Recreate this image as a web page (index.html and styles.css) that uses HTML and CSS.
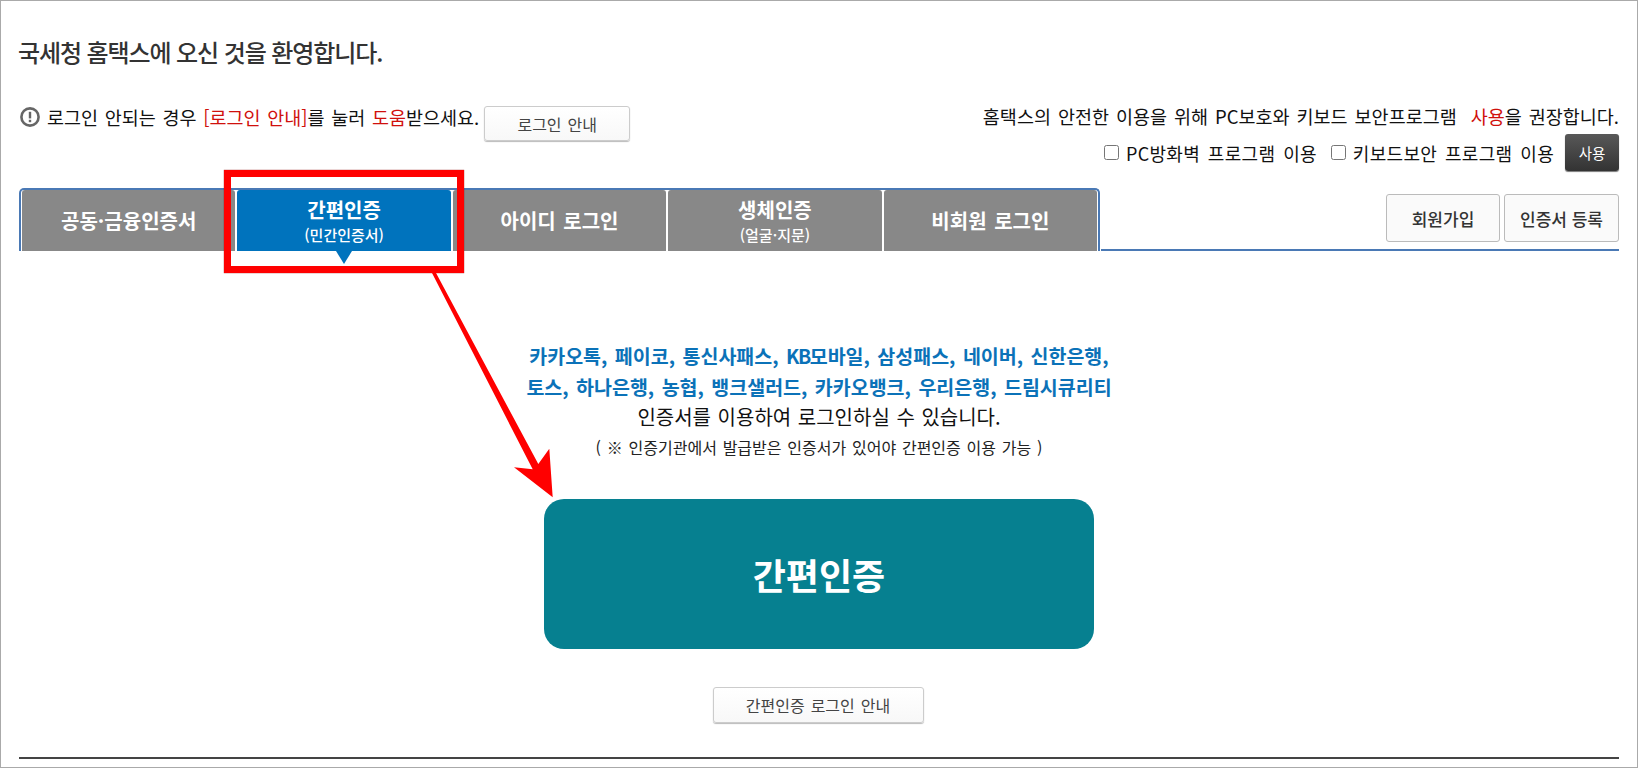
FILE: index.html
```html
<!DOCTYPE html>
<html lang="ko">

<head>
    <meta charset="UTF-8">
    <meta name="viewport" content="width=device-width, initial-scale=1.0">
    <title>국세청 홈택스 로그인</title>
    <link rel="stylesheet" href="styles.css">
</head>

<body>

    <div class="frame">
        <h1 class="page-title">국세청 홈택스에 오신 것을 환영합니다.</h1>

        <!-- Notice row -->
        <div class="notice-row">
            <div class="notice-left">
                <svg class="alert-icon" width="20" height="20" viewBox="0 0 20 20">
                    <circle cx="10" cy="10" r="8.6" fill="none" stroke="#666" stroke-width="2.6"></circle>
                    <rect x="8.8" y="4.8" width="2.4" height="6.6" fill="#666"></rect>
                    <rect x="8.8" y="12.8" width="2.4" height="2.4" fill="#666"></rect>
                </svg>
                <span class="notice-text">로그인 안되는 경우 <em>[로그인 안내]</em>를 눌러 <em>도움</em>받으세요.</span>
                <button class="btn-plain btn-guide">로그인 안내</button>
            </div>
            <div class="notice-right">
                <p class="security-text">홈택스의 안전한 이용을 위해 PC보호와 키보드 보안프로그램 &nbsp;<em>사용</em>을 권장합니다.</p>
                <div class="security-opts">
                    <label class="opt-pc"><input type="checkbox"> PC방화벽 프로그램 이용</label>
                    <label class="opt-key"><input type="checkbox"> 키보드보안 프로그램 이용</label>
                    <button class="btn-dark">사용</button>
                </div>
            </div>
        </div>

        <!-- Tabs -->
        <div class="tab-row">
            <div class="tabs">
                <div class="tab">공동·금융인증서</div>
                <div class="tab active">간편인증<small>(민간인증서)</small></div>
                <div class="tab">아이디 로그인</div>
                <div class="tab">생체인증<small>(얼굴·지문)</small></div>
                <div class="tab">비회원 로그인</div>
            </div>
            <div class="tab-side">
                <button class="btn-side btn-join">회원가입</button>
                <button class="btn-side btn-cert">인증서 등록</button>
            </div>
        </div>

        <!-- Simple auth panel -->
        <div class="panel">
            <p class="providers">카카오톡, 페이코, 통신사패스, <span class="latin">KB</span>모바일, 삼성패스, 네이버, 신한은행,<br>토스, 하나은행, 농협, 뱅크샐러드, 카카오뱅크, 우리은행, 드림시큐리티</p>
            <p class="panel-text">인증서를 이용하여 로그인하실 수 있습니다.</p>
            <p class="panel-note">( ※ 인증기관에서 발급받은 인증서가 있어야 간편인증 이용 가능 )</p>
            <button class="btn-main">간편인증</button>
            <button class="btn-plain btn-panel-guide">간편인증 로그인 안내</button>
        </div>

        <div class="foot-line"></div>

        <!-- Red annotation over the page -->
        <div class="mark-box"></div>
        <svg class="mark-arrow" width="160" height="240" viewBox="0 0 160 240">
            <path d="M1 2 L4.5 1 L107.3 193 L118.3 177.7 L121.7 226.3 L83 196.3 L101.7 198.3 Z" fill="#f00"></path>
        </svg>
    </div>

</body>

</html>
```

FILE: styles.css
```css
* {
    box-sizing: border-box;
}

body {
    margin: 0;
    padding: 0;
    background-color: #fff;
    font-family: "Noto Sans CJK KR", "Noto Sans", sans-serif;
    color: #222;
}

button {
    font-family: inherit;
    cursor: pointer;
    padding: 0;
}

em {
    font-style: normal;
    color: #d0100c;
}

.frame {
    position: relative;
    width: 1638px;
    height: 768px;
    padding: 0 18px;
    border: 1px solid #aaa;
    overflow: hidden;
}

.page-title {
    margin: 35px 0 0 -1px;
    height: 32px;
    line-height: 32px;
    font-size: 24px;
    font-weight: 500;
    letter-spacing: -1.1px;
    color: #333;
}

.notice-row {
    display: flex;
    justify-content: space-between;
    margin-top: 36px;
    height: 84px;
}

.notice-left {
    display: flex;
    align-items: flex-start;
}

.alert-icon {
    margin: 3px 7px 0 1px;
}

.notice-text {
    font-size: 18.5px;
    line-height: 26px;
    word-spacing: 1.5px;
    color: #111;
}

.btn-plain {
    background: linear-gradient(#fff, #f8f8f8);
    border: 1px solid #ccc;
    border-radius: 3px;
    box-shadow: 0 1px 1px #bbb;
    font-size: 16px;
    word-spacing: 1.5px;
    color: #444;
}

.btn-guide {
    width: 146px;
    height: 35px;
    margin-left: 5px;
    margin-top: 2px;
}

.notice-right {
    display: flex;
    flex-direction: column;
    align-items: flex-end;
}

.security-text {
    margin: -1px 0 0;
    font-size: 18.5px;
    line-height: 26px;
    word-spacing: 1.8px;
    color: #111;
}

.security-opts {
    display: flex;
    align-items: center;
    margin-top: 5px;
    font-size: 18px;
    word-spacing: 2.5px;
    letter-spacing: 0.3px;
    color: #111;
}

.security-opts label {
    display: flex;
    align-items: center;
    gap: 7px;
}

.security-opts input {
    width: 15px;
    height: 15px;
    margin: 0;
}

.opt-pc {
    margin-right: 14px;
}

.opt-key {
    margin-right: 11px;
}

.btn-dark {
    width: 54px;
    height: 37px;
    border: none;
    border-radius: 3px;
    background: linear-gradient(#585858, #333);
    box-shadow: 0 1px 1px #777;
    color: #fff;
    font-size: 14.5px;
}

.tab-row {
    display: flex;
    justify-content: space-between;
    height: 63px;
}

.tabs {
    display: flex;
    gap: 2px;
    width: 1081px;
    height: 63px;
    padding: 0 1px;
    border: 2px solid #4a79b5;
    border-bottom: none;
    border-radius: 5px 5px 0 0;
}

.tab {
    flex: 1;
    display: flex;
    flex-direction: column;
    align-items: center;
    justify-content: center;
    height: 61px;
    background-color: #888;
    border-radius: 3px 3px 0 0;
    color: #fff;
    font-size: 20px;
    font-weight: 700;
    word-spacing: 2px;
    line-height: 28px;
}

.tab small {
    font-size: 15px;
    font-weight: 500;
    line-height: 22px;
}

.tab.active {
    position: relative;
    background-color: #0073bd;
}

.tab.active::after {
    content: "";
    position: absolute;
    left: 99px;
    top: 61px;
    border-left: 8px solid transparent;
    border-right: 8px solid transparent;
    border-top: 13px solid #0073bd;
}

.tab-side {
    flex: 1;
    display: flex;
    justify-content: flex-end;
    gap: 4px;
    height: 63px;
    margin-left: 1px;
    padding-top: 6px;
    border-bottom: 2px solid #4a79b5;
}

.btn-side {
    height: 48px;
    background-color: #fafafa;
    border: 1px solid #bbb;
    border-radius: 3px;
    font-size: 17px;
    font-weight: 500;
    color: #333;
}

.btn-join {
    width: 114px;
}

.btn-cert {
    width: 115px;
}

.panel {
    display: flex;
    flex-direction: column;
    align-items: center;
    padding-top: 89px;
}

.panel p {
    margin: 0;
    text-align: center;
}

.providers {
    font-size: 19.5px;
    font-weight: 700;
    line-height: 31px;
    word-spacing: 2px;
    color: #0b72b8;
}

.providers .latin {
    letter-spacing: -1.5px;
}

.panel-text {
    font-size: 20px;
    line-height: 30px;
    word-spacing: 1px;
    color: #111;
}

.panel-note {
    font-size: 16px;
    line-height: 31px;
    word-spacing: 1.3px;
    color: #222;
}

.btn-main {
    width: 550px;
    height: 150px;
    margin-top: 36px;
    background-color: #068090;
    border: none;
    border-radius: 20px;
    color: #fff;
    font-size: 36px;
    font-weight: 700;
}

.btn-panel-guide {
    width: 211px;
    height: 36px;
    margin-top: 38px;
    margin-right: 2px;
}

.foot-line {
    position: absolute;
    left: 18px;
    right: 18px;
    top: 756px;
    height: 2px;
    background-color: #444;
}

.mark-box {
    position: absolute;
    left: 223px;
    top: 169px;
    width: 240px;
    height: 103px;
    border: 7px solid #f00;
    box-shadow: 0 0 1px #800;
}

.mark-arrow {
    position: absolute;
    left: 430px;
    top: 270px;
}
```
